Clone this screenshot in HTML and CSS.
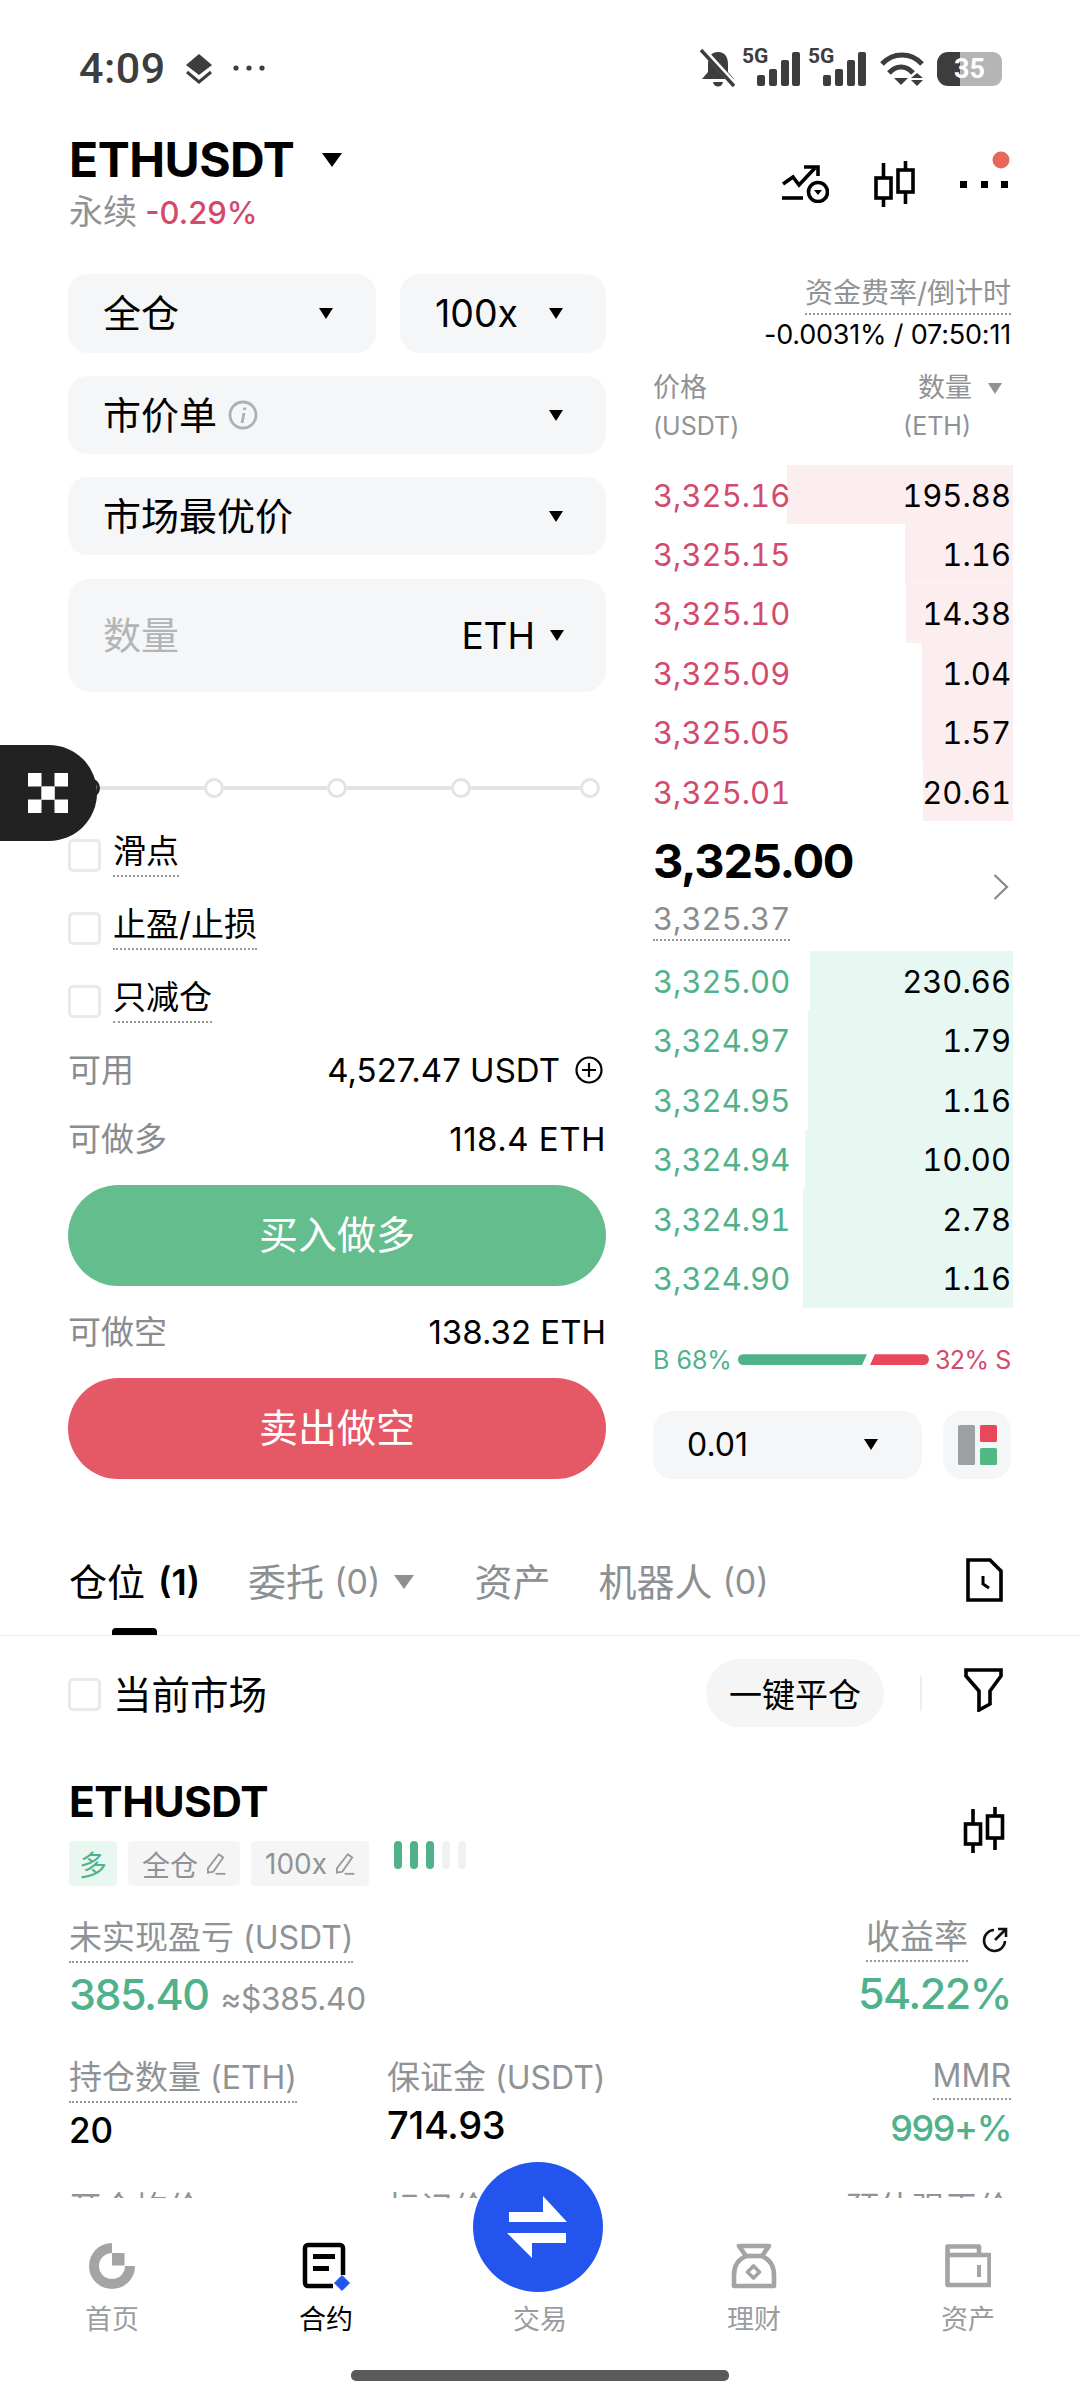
FILE: index.html
```html
<!DOCTYPE html>
<html lang="zh-CN">
<head>
<meta charset="utf-8">
<title>ETHUSDT</title>
<link rel="stylesheet" href="styles.css">
</head>
<body>
<div class="app">
  <div class="status">
    <div class="status-left">
      <span class="clock">4:09</span>
      <svg class="st-layers" width="28" height="31" viewBox="0 0 28 31"><path d="M14 1 27 12 14 22 1 12Z" fill="#3d3d3d"/><path d="M2 19 14 29 26 19" fill="none" stroke="#3d3d3d" stroke-width="3"/></svg>
      <svg class="st-dots" width="32" height="6" viewBox="0 0 32 6"><circle cx="3" cy="3" r="2.6" fill="#3d3d3d"/><circle cx="16" cy="3" r="2.6" fill="#3d3d3d"/><circle cx="29" cy="3" r="2.6" fill="#3d3d3d"/></svg>
    </div>
    <div class="status-right">
      <svg class="st-bell" width="36" height="40" viewBox="0 0 36 40"><path d="M18 4C11 4 8 9 8 16V24L2 31H34L28 24V16C28 9 25 4 18 4Z" fill="#3d3d3d"/><path d="M13 34H23C22 40 14 40 13 34Z" fill="#3d3d3d"/><path d="M2 1 35 37" stroke="#fff" stroke-width="6"/><path d="M1 2 34 38" stroke="#3d3d3d" stroke-width="3.4"/></svg>
      <svg class="sig sig-a" width="58" height="46" viewBox="0 0 58 46"><text x="0" y="21" class="five-g">5G</text><rect x="15" y="33" width="8" height="11" rx="2" fill="#3d3d3d"/><rect x="27" y="27" width="8" height="17" rx="2" fill="#3d3d3d"/><rect x="39" y="18" width="8" height="26" rx="2" fill="#3d3d3d"/><rect x="50" y="10" width="8" height="34" rx="2" fill="#3d3d3d"/></svg>
      <svg class="sig sig-b" width="58" height="46" viewBox="0 0 58 46"><text x="0" y="21" class="five-g">5G</text><rect x="15" y="33" width="8" height="11" rx="2" fill="#3d3d3d"/><rect x="27" y="27" width="8" height="17" rx="2" fill="#3d3d3d"/><rect x="39" y="18" width="8" height="26" rx="2" fill="#3d3d3d"/><rect x="50" y="10" width="8" height="34" rx="2" fill="#3d3d3d"/></svg>
      <svg class="st-wifi" width="46" height="36" viewBox="0 0 46 36"><path d="M3 13C14 1 32 1 43 13" fill="none" stroke="#3d3d3d" stroke-width="5"/><path d="M10 22C17 14 27 14 34 22" fill="none" stroke="#3d3d3d" stroke-width="5"/><path d="M15 27H29L22 34Z" fill="#3d3d3d"/><path d="M38 22 44 27H32Z" fill="#3d3d3d"/><path d="M32 29H44L38 35Z" fill="#3d3d3d"/></svg>
      <div class="battery"><span>35</span></div>
    </div>
  </div>

  <div class="head">
    <div>
      <div class="symbol">ETHUSDT<i class="caret caret-lg"></i></div>
      <div class="sub"><span class="sub-cn">永续</span> <span class="red">-0.29%</span></div>
    </div>
    <div class="head-icons">
      <svg width="47" height="38" viewBox="0 0 47 38" fill="none" stroke="#000" stroke-width="3.6"><path d="M1 19 11 12 17 20 33 3"/><path d="M22 2H36V11"/><path d="M0 33H21"/><circle cx="36" cy="27" r="9.5"/><path d="M32 25H40L36 30Z" fill="#000" stroke="none"/></svg>
      <svg width="41" height="46" viewBox="0 0 41 46" fill="none" stroke="#000" stroke-width="3.6"><rect x="2" y="17" width="15" height="20"/><path d="M9.5 2V17M9.5 37V46"/><rect x="24" y="9" width="15" height="22"/><path d="M31.5 0V9M31.5 31V43"/></svg>
      <svg class="more" width="48" height="46" viewBox="0 0 48 46"><rect x="0" y="20" width="7" height="7"/><rect x="21" y="20" width="7" height="7"/><rect x="41" y="20" width="7" height="7"/><circle cx="41" cy="-1" r="8.5" fill="#e8675c"/></svg>
    </div>
  </div>

  <div class="main">
    <div class="form">
      <div class="sel-row">
        <div class="sel sel-a"><span class="sel-text">全仓</span><i class="caret"></i></div>
        <div class="sel sel-b"><span class="lat">100x</span><i class="caret"></i></div>
      </div>
      <div class="sel sel-c">
        <span class="with-info"><span class="sel-text">市价单</span>
          <svg width="30" height="30" viewBox="0 0 30 30" fill="none" stroke="#aeb0b2" stroke-width="2.8"><circle cx="15" cy="15" r="13"/><path d="M16 13 14 23"/><path d="M16.6 7.5v2.6" stroke-width="3"/></svg>
        </span><i class="caret"></i>
      </div>
      <div class="sel sel-d"><span class="sel-text">市场最优价</span><i class="caret"></i></div>
      <div class="qty"><span class="qty-ph">数量</span><span class="qty-unit"><span class="lat">ETH</span><i class="caret"></i></span></div>

      <div class="slider">
        <i class="node node-on"></i><i class="seg"></i><i class="node"></i><i class="seg"></i><i class="node"></i><i class="seg"></i><i class="node"></i><i class="seg seg-last"></i><i class="node"></i>
      </div>

      <div class="checks">
        <div class="check"><i class="box"></i><span class="dot-label">滑点</span></div>
        <div class="check"><i class="box"></i><span class="dot-label">止盈/止损</span></div>
        <div class="check"><i class="box"></i><span class="dot-label">只减仓</span></div>
      </div>

      <div class="kv kv-first"><span class="k">可用</span><span class="v">4,527.47&nbsp;USDT
        <svg class="plus" width="28" height="28" viewBox="0 0 28 28" fill="none" stroke="#000" stroke-width="2.2"><circle cx="14" cy="14" r="12.5"/><path d="M14 7V21M7 14H21"/></svg></span></div>
      <div class="kv kv-long"><span class="k">可做多</span><span class="v">118.4 ETH</span></div>
      <div class="btn btn-buy"><span class="btn-text">买入做多</span></div>
      <div class="kv kv-short"><span class="k">可做空</span><span class="v">138.32 ETH</span></div>
      <div class="btn btn-sell"><span class="btn-text">卖出做空</span></div>
    </div>

    <div class="book">
      <div class="funding">
        <span class="funding-label">资金费率/倒计时</span>
        <span class="funding-val">-0.0031% / 07:50:11</span>
      </div>
      <div class="book-head">
        <div>价格<br><span class="lat">(USDT)</span></div>
        <div class="book-head-r"><span>数量<i class="caret caret-gray"></i></span><span class="lat eth-unit">(ETH)</span></div>
      </div>
      <div class="rows">
        <div class="row ask" style="--w:226px"><span>3,325.16</span><b>195.88</b></div>
        <div class="row ask" style="--w:108px"><span>3,325.15</span><b>1.16</b></div>
        <div class="row ask" style="--w:107px"><span>3,325.10</span><b>14.38</b></div>
        <div class="row ask" style="--w:91px"><span>3,325.09</span><b>1.04</b></div>
        <div class="row ask" style="--w:91px"><span>3,325.05</span><b>1.57</b></div>
        <div class="row ask" style="--w:90px"><span>3,325.01</span><b>20.61</b></div>
      </div>
      <div class="mid">
        <div>
          <div class="last">3,325.00</div>
          <div class="mark">3,325.37</div>
        </div>
        <svg width="16" height="26" viewBox="0 0 16 26" fill="none" stroke="#888" stroke-width="2.2"><path d="M1.5 1 14 13 1.5 25"/></svg>
      </div>
      <div class="rows">
        <div class="row bid" style="--w:203px"><span>3,325.00</span><b>230.66</b></div>
        <div class="row bid" style="--w:205px"><span>3,324.97</span><b>1.79</b></div>
        <div class="row bid" style="--w:205px"><span>3,324.95</span><b>1.16</b></div>
        <div class="row bid" style="--w:208px"><span>3,324.94</span><b>10.00</b></div>
        <div class="row bid" style="--w:210px"><span>3,324.91</span><b>2.78</b></div>
        <div class="row bid" style="--w:210px"><span>3,324.90</span><b>1.16</b></div>
      </div>
      <div class="ratio">
        <span class="green">B 68%</span>
        <i class="bar-b"></i><i class="bar-s"></i>
        <span class="red">32% S</span>
      </div>
      <div class="depth">
        <div class="depth-sel">0.01<i class="caret"></i></div>
        <div class="depth-btn">
          <svg width="39" height="40" viewBox="0 0 39 40"><rect x="0" y="0" width="17" height="40" rx="1.5" fill="#9ea0a3"/><rect x="22" y="0" width="17" height="17" rx="1.5" fill="#e9475a"/><rect x="22" y="23" width="17" height="17" rx="1.5" fill="#52b985"/></svg>
        </div>
      </div>
    </div>
  </div>

  <div class="tabs">
    <span class="tab tab-on">仓位<b class="paren">(1)</b></span>
    <span class="tab tab-order">委托<span class="paren">(0)</span><i class="caret caret-tab"></i></span>
    <span class="tab tab-assets">资产</span>
    <span class="tab tab-bot">机器人<span class="paren">(0)</span></span>
    <svg class="tab-file" width="37" height="44" viewBox="0 0 37 44" fill="none" stroke="#000" stroke-width="3.6"><path d="M2 2H24L35 13V42H2Z"/><path d="M17 18V26L23 30" stroke-width="3"/></svg>
  </div>

  <div class="filter">
    <i class="box box-lg"></i><span class="filter-label">当前市场</span>
    <span class="pill">一键平仓</span>
    <i class="filter-div"></i>
    <svg class="filter-icon" width="39" height="44" viewBox="0 0 39 44" fill="none" stroke="#000" stroke-width="3.6"><path d="M2 2H37V8L26 23V36L15 42V23L2 8Z"/></svg>
  </div>

  <div class="pos-head">
    <div>
      <div class="pos-symbol">ETHUSDT</div>
      <div class="tags">
        <span class="tag tag-long">多</span>
        <span class="tag">全仓<svg width="22" height="24" viewBox="0 0 19 22" fill="none" stroke="#9a9a9a" stroke-width="1.7"><path d="M3 15 13 2l4 3L8 18l-5 1Z"/><path d="M10 20H19"/></svg></span>
        <span class="tag">100x<svg width="22" height="24" viewBox="0 0 19 22" fill="none" stroke="#9a9a9a" stroke-width="1.7"><path d="M3 15 13 2l4 3L8 18l-5 1Z"/><path d="M10 20H19"/></svg></span>
        <span class="lev"><i class="lv on"></i><i class="lv on"></i><i class="lv on"></i><i class="lv"></i><i class="lv"></i></span>
      </div>
    </div>
    <svg class="pos-candle" width="42" height="46" viewBox="0 0 41 46" fill="none" stroke="#000" stroke-width="3.6"><rect x="2" y="17" width="15" height="20"/><path d="M9.5 2V17M9.5 37V46"/><rect x="24" y="9" width="15" height="22"/><path d="M31.5 0V9M31.5 31V43"/></svg>
  </div>

  <div class="metrics">
    <div class="m m-span">
      <span class="m-label">未实现盈亏<span class="unit">(USDT)</span></span>
      <div class="big green">385.40<small>≈$385.40</small></div>
    </div>
    <div class="m m-right">
      <span class="m-row"><span class="m-label m-label-lg">收益率</span>
        <svg width="28" height="28" viewBox="0 0 28 28" fill="none" stroke="#111" stroke-width="2.6"><path d="M13 4A10.5 10.5 0 1 0 24 15"/><path d="M14 14 25 3M17 3H25V11"/></svg></span>
      <div class="big green">54.22%</div>
    </div>
    <div class="m">
      <span class="m-label">持仓数量<span class="unit">(ETH)</span></span>
      <div class="val">20</div>
    </div>
    <div class="m">
      <span class="m-plain">保证金<span class="unit">(USDT)</span></span>
      <div class="val val-mid">714.93</div>
    </div>
    <div class="m m-right">
      <span class="m-label m-label-up">MMR</span>
      <div class="val val-end green">999+%</div>
    </div>
    <div class="m"><span class="m-plain">开仓均价</span></div>
    <div class="m"><span class="m-plain">标记价格</span></div>
    <div class="m m-right"><span class="m-plain">预估强平价</span></div>
  </div>

  <div class="nav">
    <div class="nav-items">
      <div class="nav-item">
        <svg width="46" height="46" viewBox="0 0 46 46" fill="none" stroke="#a2a4a5" stroke-width="10"><path d="M23 5A18 18 0 1 0 41 23"/><rect x="23" y="10" width="12.5" height="12.5" fill="#a2a4a5" stroke="none"/></svg>
        <span>首页</span>
      </div>
      <div class="nav-item nav-on">
        <svg class="nav-doc" width="46" height="46" viewBox="0 0 46 46"><path d="M30 43H5A3 3 0 0 1 2 40V5A3 3 0 0 1 5 2H37A3 3 0 0 1 40 5V32" fill="none" stroke="#000" stroke-width="4.5"/><rect x="10" y="11" width="22" height="5"/><rect x="10" y="23" width="16" height="5"/><path d="M39 32.5 46.5 40 39 47.5 31.5 40Z" fill="#2355ee" stroke="#2355ee" stroke-width="1" stroke-linejoin="round"/></svg>
        <span>合约</span>
      </div>
      <div class="nav-item nav-mid">
        <div class="fab">
          <svg width="130" height="130" viewBox="0 0 130 130" fill="#fff"><path d="M70 34 94 60H36V50H70Z"/><path d="M34 71H93V81H59V96Z"/></svg>
        </div>
        <span>交易</span>
      </div>
      <div class="nav-item">
        <svg width="46" height="46" viewBox="0 0 46 46" fill="none" stroke="#a2a4a5" stroke-width="4.6" stroke-linejoin="round"><path d="M8 3H38L31 13C40 17 43 24 43 32V43H3V32C3 24 6 17 15 13Z"/><path d="M15 13H31"/><path d="M22.5 23 28.5 29 22.5 35 16.5 29Z" stroke-width="3.6"/></svg>
        <span>理财</span>
      </div>
      <div class="nav-item">
        <svg width="46" height="46" viewBox="0 0 46 46" fill="none" stroke="#a2a4a5" stroke-width="4.6" stroke-linejoin="round"><path d="M2.5 42V3.5H34V12H44.5V42Z"/><path d="M2.5 12H34"/><path d="M34 22V34" stroke-width="4"/></svg>
        <span>资产</span>
      </div>
    </div>
    <div class="home-bar"></div>
  </div>

  <div class="float-badge">
    <svg width="40" height="40" viewBox="0 0 40 40" fill="#fff"><rect width="13.5" height="13.5"/><rect x="26.5" width="13.5" height="13.5"/><rect x="13.3" y="13.3" width="13.5" height="13.5"/><rect y="26.5" width="13.5" height="13.5"/><rect x="26.5" y="26.5" width="13.5" height="13.5"/></svg>
  </div>
</div>
</body>
</html>
```
FILE: styles.css
```css
* { box-sizing: border-box; }
html, body { margin: 0; padding: 0; background: #fff; }
i { display: block; font-style: normal; }
.app {
  position: relative;
  width: 1080px;
  height: 2400px;
  overflow: hidden;
  background: #fff;
  color: #000;
  font-family: Inter, "Noto Sans CJK SC", sans-serif;
}
.lat { font-family: Inter, sans-serif; }
.red { color: #d34a6b; }
.green { color: #4fb28a; }

/* status bar */
.status {
  height: 135px;
  padding: 48px 78px 0 79px;
  display: flex;
  justify-content: space-between;
  align-items: flex-start;
}
.status-left { display: flex; align-items: center; height: 40px; }
.clock { font: 500 43px/40px Roboto, sans-serif; letter-spacing: 0.5px; color: #3d3d3d; width: 106px; }
.st-dots { margin-left: 20px; }
.status-right { display: flex; align-items: flex-start; }
.sig { margin-top: -6px; }
.sig-a { margin-left: 6px; }
.sig-b { margin-left: 8px; }
.st-wifi { margin: 3px 0 0 13px; }
.five-g { font: 700 21px Roboto, sans-serif; fill: #3d3d3d; }
.battery {
  margin: 4px 0 0 12px;
  width: 65px;
  height: 34px;
  border-radius: 11px 9px 9px 11px;
  background: linear-gradient(90deg, #3d3d3d 0 23px, #b5b5b5 23px);
  display: flex;
  align-items: center;
  justify-content: center;
  color: #fff;
  font: 700 27px/34px Roboto, sans-serif;
}

/* header */
.head {
  display: flex;
  justify-content: space-between;
  padding: 0 72px 38px 69px;
}
.symbol {
  display: flex;
  align-items: center;
  font-size: 48px;
  font-weight: 700;
  line-height: 50px;
  letter-spacing: -0.5px;
}
.caret {
  flex: none;
  width: 0;
  height: 0;
  border-left: 7.5px solid transparent;
  border-right: 7.5px solid transparent;
  border-top: 11px solid #000;
}
.caret-lg { border-left-width: 10px; border-right-width: 10px; border-top-width: 14px; margin-left: 28px; }
.sub { margin-top: 4px; font-size: 31px; font-weight: 500; line-height: 46px; }
.sub-cn { color: #909396; font-size: 34px; font-weight: 400; }
.head-icons { display: flex; align-items: center; gap: 45px; margin-top: 26px; height: 46px; }
.more { overflow: visible; }

/* main grid */
.main {
  display: grid;
  grid-template-columns: 538px 358px;
  column-gap: 47px;
  padding: 0 69px 0 68px;
}
.form { display: flex; flex-direction: column; }
.sel-row { display: flex; gap: 24px; }
.sel {
  height: 78px;
  border-radius: 20px;
  background: #f5f6f7;
  display: flex;
  align-items: center;
  justify-content: space-between;
  font-size: 38px;
  padding: 0 43px 0 35px;
}
.sel-text { margin-top: -6px; }
.sel-a { width: 308px; height: 79px; }
.sel-b { width: 206px; height: 79px; }
.sel-b .lat { font-size: 37.5px; }
.sel-c, .sel-d { margin-top: 23px; }
.with-info { display: flex; align-items: center; gap: 11px; }
.qty {
  margin-top: 24px;
  height: 113px;
  border-radius: 22px;
  background: #f5f6f7;
  display: flex;
  align-items: center;
  justify-content: space-between;
  padding: 0 42px 0 35px;
}
.qty-ph { font-size: 38px; color: #b2b5b8; margin-top: -6px; }
.qty-unit { display: flex; align-items: center; gap: 15px; font-size: 37px; }

.slider {
  margin-top: 84px;
  height: 24px;
  display: flex;
  align-items: center;
  padding-left: 12px;
}
.node {
  flex: none;
  width: 20px;
  height: 20px;
  border-radius: 50%;
  border: 3.5px solid #e2e3e4;
  background: #fff;
}
.node-on { border-color: #222; }
.seg { flex: none; width: 103.5px; height: 4px; background: #e2e3e4; }
.seg-last { width: 109px; }

.checks { margin-top: 36px; display: flex; flex-direction: column; gap: 29px; }
.check { height: 44px; display: flex; align-items: flex-start; gap: 12px; }
.box {
  flex: none;
  width: 33px;
  height: 33px;
  margin-top: 3px;
  border: 3px solid #e8e9ea;
  border-radius: 5px;
  background: #fff;
}
.dot-label {
  margin-top: -3px;
  font-size: 33px;
  line-height: 36px;
  padding-bottom: 6px;
  border-bottom: 2px dotted #9a9a9a;
}

.kv { display: flex; justify-content: space-between; align-items: center; height: 44px; }
.kv-first { margin-top: 22px; }
.kv-long { margin-top: 25px; }
.kv-long .v { letter-spacing: 0.5px; }
.kv-short { margin-top: 24px; }
.k { color: #8a8d90; font-size: 33px; margin-top: -5px; }
.v { display: flex; align-items: center; font-size: 33px; font-weight: 400; }
.plus { margin: 0 3px 0 15px; }
.btn {
  margin-top: 24px;
  height: 101px;
  border-radius: 51px;
  display: flex;
  align-items: center;
  justify-content: center;
  color: #fff;
  font-size: 39px;
}
.btn-text { margin-top: -8px; }
.btn-buy { background: #63bd8c; }
.btn-sell { background: #e55866; }

/* order book */
.book { display: flex; flex-direction: column; min-width: 0; }
.funding { padding-top: 2px; display: flex; flex-direction: column; align-items: flex-end; }
.funding-label {
  font-size: 28px;
  line-height: 34px;
  color: #909396;
  padding-bottom: 3px;
  border-bottom: 2px dotted #9a9a9a;
}
.funding-val { margin-top: 3px; font-size: 27px; line-height: 34px; letter-spacing: -0.2px; white-space: nowrap; }
.book-head {
  margin-top: 17px;
  display: flex;
  justify-content: space-between;
  font-size: 27px;
  line-height: 38px;
  color: #909396;
}
.book-head .lat { font-size: 25px; }
.book-head-r { display: flex; flex-direction: column; align-items: flex-end; padding-right: 9px; }
.book-head-r span:first-child { display: flex; align-items: center; }
.book-head-r .eth-unit { margin-right: 31px; }
.caret-gray { margin-left: 16px; border-top-color: #909396; }
.book-head + .rows { margin-top: 20px; }
.rows { display: flex; flex-direction: column; }
.row {
  height: 59.4px;
  margin-right: -2px;
  padding-right: 2px;
  padding-top: 1px;
  display: flex;
  align-items: center;
  justify-content: space-between;
  font-size: 31px;
  font-variant-numeric: tabular-nums;
  background-repeat: no-repeat;
  background-position: right center;
  background-size: var(--w) 100%;
}
.row b { font-weight: 400; }
.ask { background-image: linear-gradient(#fcedef, #fcedef); }
.ask span { color: #d34a6b; }
.bid { background-image: linear-gradient(#e7f7f1, #e7f7f1); }
.bid span { color: #4fb28a; }
.mid {
  margin-top: 12px;
  margin-bottom: 10px;
  display: flex;
  justify-content: space-between;
  align-items: center;
  padding-right: 2px;
}
.last { font-size: 47px; font-weight: 700; line-height: 56px; letter-spacing: -1.3px; }
.mark {
  width: fit-content;
  margin-top: 10px;
  font-size: 31px;
  line-height: 40px;
  color: #8a8d90;
  font-variant-numeric: tabular-nums;
  border-bottom: 2px dotted #9a9a9a;
}
.ratio {
  margin-top: 32px;
  height: 40px;
  display: flex;
  align-items: center;
  font-size: 25px;
  white-space: nowrap;
}
.ratio .red { letter-spacing: -0.5px; }
.bar-b {
  flex: none;
  margin-left: 6px;
  width: 129px;
  height: 11px;
  border-radius: 6px 0 0 6px;
  background: #4fb28a;
  clip-path: polygon(0 0, 100% 0, calc(100% - 5px) 100%, 0 100%);
}
.bar-s {
  flex: none;
  margin: 0 6px 0 3px;
  width: 59px;
  height: 11px;
  border-radius: 0 6px 6px 0;
  background: #e9475a;
  clip-path: polygon(5px 0, 100% 0, 100% 100%, 0 100%);
}
.depth { margin-top: 31px; display: flex; justify-content: space-between; }
.depth-sel {
  width: 269px;
  height: 68px;
  border-radius: 20px;
  background: #f5f6f7;
  display: flex;
  align-items: center;
  justify-content: space-between;
  padding: 0 44px 0 34px;
  font-size: 32px;
}
.depth-btn {
  width: 68px;
  height: 68px;
  border-radius: 20px;
  background: #f5f6f7;
  display: flex;
  align-items: center;
  justify-content: center;
}

/* tabs */
.tabs {
  margin-top: 75px;
  height: 82px;
  padding: 3px 77px 0 69px;
  display: flex;
  align-items: flex-start;
  border-bottom: 1px solid #eeeeee;
  font-size: 38px;
  line-height: 50px;
  color: #8d9093;
}
.tab { display: flex; align-items: center; position: relative; white-space: nowrap; }
.paren { margin-left: 10px; font-size: 34px; font-weight: 400; }
.tab-on { color: #000; }
.tab-on b { font-weight: 600; font-size: 36px; margin-left: 13px; }
.tab-on::after {
  content: "";
  position: absolute;
  left: 43px;
  top: 71px;
  width: 45px;
  height: 7px;
  border-radius: 4px 4px 0 0;
  background: #000;
}
.tab-order { margin-left: 48px; }
.caret-tab { margin-left: 14px; border-left-width: 10px; border-right-width: 10px; border-top-width: 14px; border-top-color: #8d9093; }
.tab-assets { margin-left: 60px; }
.tab-bot { margin-left: 48px; }
.tab-file { margin-left: auto; margin-top: 1px; }

.filter {
  padding: 23px 77px 0 68px;
  display: flex;
  align-items: center;
}
.box-lg { margin-top: 3px; }
.filter-label { margin-left: 12px; font-size: 38.5px; margin-top: -3px; }
.pill {
  margin-left: auto;
  width: 178px;
  height: 68px;
  border-radius: 34px;
  background: #f5f5f5;
  display: flex;
  align-items: center;
  justify-content: center;
  font-size: 33px;
}
.filter-div { margin: 0 42px 0 36px; width: 2px; height: 35px; background: #eeeeee; }
.filter-icon { margin-bottom: 6px; }

.pos-head {
  margin-top: 52px;
  padding: 0 75px 0 69px;
  display: flex;
  justify-content: space-between;
  align-items: center;
}
.pos-symbol { font-size: 42.5px; font-weight: 700; line-height: 46px; letter-spacing: -0.5px; }
.tags { margin-top: 16px; display: flex; gap: 11px; height: 45px; }
.tag {
  height: 45px;
  padding: 0 14px;
  border-radius: 4px;
  background: #f5f5f5;
  color: #909396;
  font-size: 28px;
  display: flex;
  align-items: center;
  gap: 6px;
}
.tag-long { background: #e8f7f0; color: #4fb28a; padding: 0 10px; }
.lev { margin-left: 14px; display: flex; gap: 8px; }
.lv { width: 8px; height: 28px; border-radius: 4px; background: #f0f1f2; }
.lv.on { background: #4fb28a; }
.pos-candle { margin-bottom: 6px; }

.metrics {
  margin-top: 31px;
  padding: 0 69px;
  display: grid;
  grid-template-columns: 318px 1fr auto;
  grid-template-rows: 100px 91px 40px;
  row-gap: 40px;
}
.m { display: flex; flex-direction: column; align-items: flex-start; }
.m-span { grid-column: span 2; }
.m-right { align-items: flex-end; }
.m-row { display: flex; align-items: center; gap: 13px; margin-right: 2px; }
.m-label, .m-plain { font-size: 33px; line-height: 40px; color: #909396; white-space: nowrap; }
.m-label { padding-bottom: 3px; border-bottom: 2px dotted #9a9a9a; }
.m-label-lg { font-size: 34px; }
.unit { font-size: 32px; margin-left: 9px; }
.m-label-up { line-height: 38px; font-size: 32px; }
.big { margin-top: 6px; font-size: 43px; font-weight: 500; line-height: 50px; letter-spacing: -1.5px; white-space: nowrap; }
.big small { color: #909396; font-size: 31.5px; font-weight: 400; margin-left: 12px; letter-spacing: -0.3px; }
.val { margin-top: 5px; font-size: 35px; font-weight: 500; line-height: 44px; }
.val-mid { font-size: 38px; letter-spacing: -0.3px; }
.val-end { margin-top: 6px; font-size: 36px; letter-spacing: -1.4px; }

/* nav */
.nav {
  position: absolute;
  left: 0;
  right: 0;
  bottom: 0;
  height: 202px;
  background: #fff;
  padding-top: 45px;
}
.nav-items {
  display: grid;
  grid-template-columns: repeat(5, 214px);
  padding-left: 5px;
}
.nav-item {
  position: relative;
  height: 95px;
  display: flex;
  flex-direction: column;
  align-items: center;
  justify-content: flex-end;
  gap: 13px;
  font-size: 27px;
  line-height: 36px;
  color: #9a9d9f;
}
.nav-on { color: #000; }
.nav-doc { overflow: visible; }
.fab {
  position: absolute;
  left: 40px;
  top: -81px;
  width: 130px;
  height: 130px;
  border-radius: 50%;
  background: #2355ee;
}
.home-bar {
  margin: 32px auto 0;
  width: 378px;
  height: 11px;
  border-radius: 5px;
  background: #5a5a5a;
}
.float-badge {
  position: absolute;
  left: 0;
  top: 745px;
  width: 97px;
  height: 96px;
  border-radius: 0 48px 48px 0;
  background: #222;
  display: flex;
  align-items: center;
  padding-left: 28px;
}
```
